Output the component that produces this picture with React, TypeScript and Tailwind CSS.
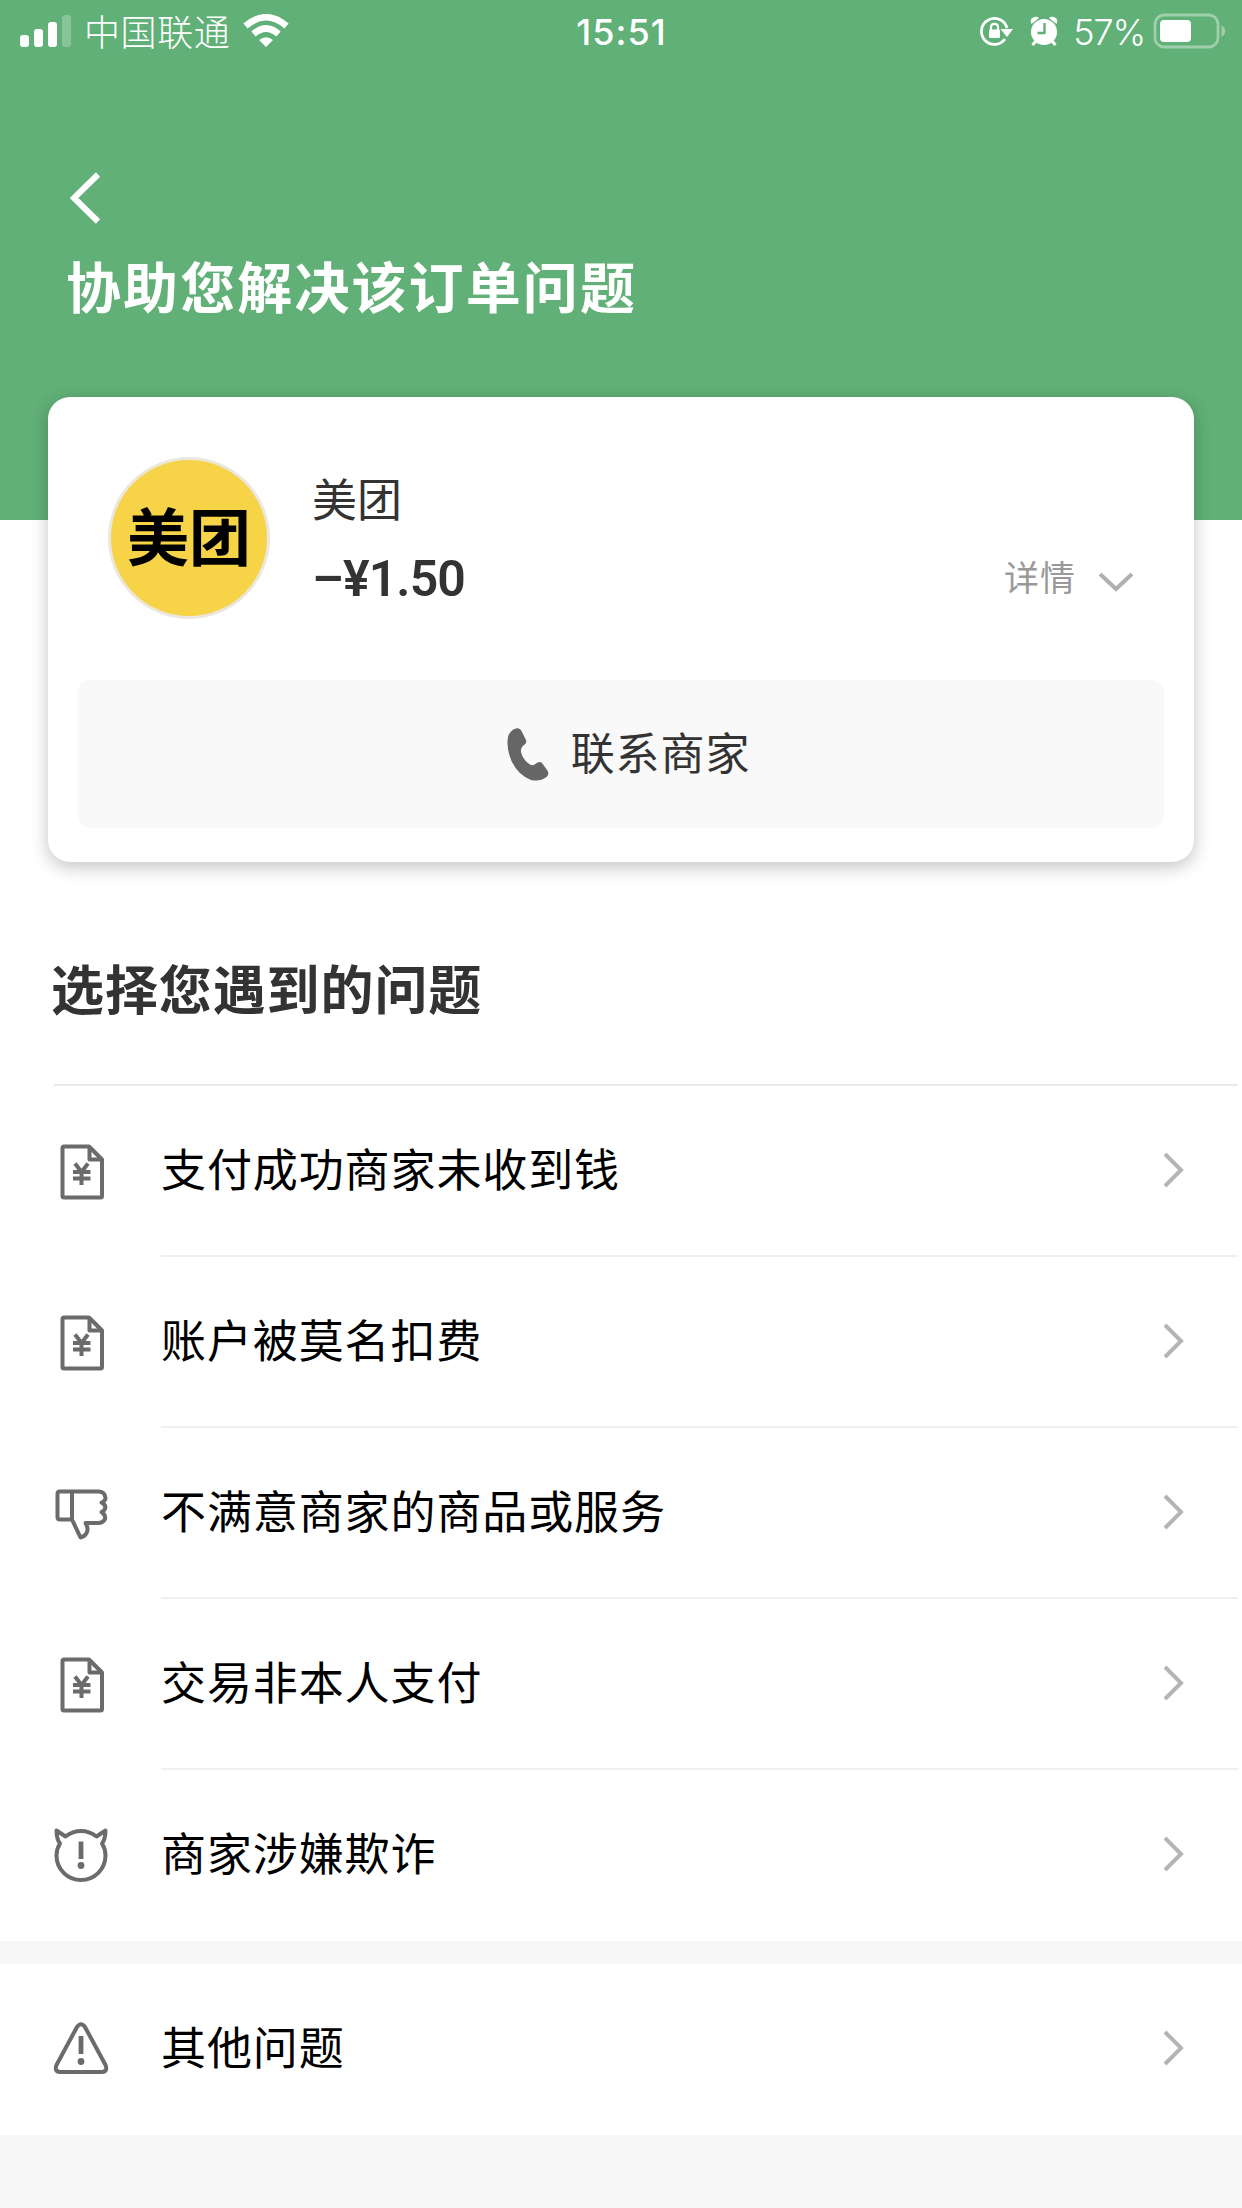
import type { ReactNode } from "react";

type IconName = "bill" | "thumb" | "devil" | "warn";

type Issue = {
  id: string;
  icon: IconName;
  label: string;
};

const ISSUES: Issue[] = [
  { id: "unpaid", icon: "bill", label: "支付成功商家未收到钱" },
  { id: "unknown-fee", icon: "bill", label: "账户被莫名扣费" },
  { id: "unsatisfied", icon: "thumb", label: "不满意商家的商品或服务" },
  { id: "not-me", icon: "bill", label: "交易非本人支付" },
  { id: "fraud", icon: "devil", label: "商家涉嫌欺诈" }
];

const OTHER: Issue = { id: "other", icon: "warn", label: "其他问题" };

// All issue icons share a 60x60 box.
const ICONS: Record<IconName, ReactNode> = {
  bill: (
    <>
      <path d="M12.5 5.500 H38 L51 18.500 V55 Q51 56.500 49.500 56.500 H13 Q11.500 56.500 11.500 55 V7 Q11.500 5.500 13 5.500 Z" />
      <path d="M38.500 6 V18.500 H50.500" />
      <path d="M24 22.500 L30.500 31 L37 22.500 M30.500 31 V44 M22 31 H39.500 M22 37.500 H39.500" />
    </>
  ),
  thumb: (
    <>
      <path d="M8.500 8.500 H48 Q54 9 54.500 15 Q54.500 18 50.500 19.500 Q55.500 22 54 26 Q53 28 50.500 29 Q55 32 54 36 Q52 40 47 40 H34.500 Q38 46 35.500 50 Q34 53.500 29.500 54.500 L21 36.500 H9 Q6.500 36.500 6.500 34 V11 Q6.500 8.500 8.500 8.500 Z" />
      <path d="M21 8.500 V36.500" />
    </>
  ),
  devil: (
    <>
      <path d="M14.500 11.500 Q22 6 30 6 Q38 6 45.500 11.500 L54.500 5.500 Q54.500 14 51 18.500 Q54.500 24 54.500 30.500 A24.500 24.500 0 0 1 5.500 30.500 Q5.500 24 9 18.500 Q5.500 14 5.500 5.500 Z" />
      <path d="M30 16.500 V34" strokeWidth="4.800" />
      <circle cx="30" cy="40.500" r="3.400" fill="currentColor" stroke="none" />
    </>
  ),
  warn: (
    <>
      <path d="M26 8 Q30 2.500 34 8 L54.500 46 Q57 52.500 51 53 H9 Q3 52.500 5.500 46 Z" />
      <path d="M30 17 V35" strokeWidth="4.800" />
      <circle cx="30" cy="42.500" r="3.400" fill="currentColor" stroke="none" />
    </>
  )
};

function IssueIcon({ name }: { name: IconName }) {
  return (
    <svg viewBox="0 0 60 60" className="mb-0.5 h-[60px] w-[60px] shrink-0 text-[#6b6b6b]" fill="none" stroke="currentColor" strokeWidth="4" strokeLinejoin="round">
      {ICONS[name]}
    </svg>
  );
}

function IssueRow({ issue, last = false }: { issue: Issue; last?: boolean }) {
  return (
    <button type="button" className="flex h-[171px] w-full items-center pl-[51px] text-left">
      <IssueIcon name={issue.icon} />
      <span
        className={
          last
            ? "ml-[50px] mr-1 flex h-full flex-1 items-center justify-between pr-[53px] pb-0.5"
            : "ml-[50px] mr-1 flex h-full flex-1 items-center justify-between border-b-2 border-[#f0f0f0] pr-[53px]"
        }
      >
        <span className="pb-1.5 text-[45px] leading-[60px] tracking-[0.9px] text-black">{issue.label}</span>
        <svg viewBox="0 0 24 40" className="mb-0.5 h-10 w-6" fill="none" stroke="#b4b4b4" strokeWidth="4">
          <path d="M4 4 L20 20 L4 36" />
        </svg>
      </span>
    </button>
  );
}

function StatusBar() {
  return (
    <div className="grid h-[60px] grid-cols-3 items-center pl-5 pr-[15px] text-white">
      <div className="flex items-center">
        <div className="flex items-end gap-[5px]">
          <span className="h-3 w-[9px] rounded-[3px] bg-white" />
          <span className="h-[18px] w-[9px] rounded-[3px] bg-white" />
          <span className="h-[25px] w-[9px] rounded-[3px] bg-white" />
          <span className="h-8 w-[9px] rounded-[3px] bg-white/25" />
        </div>
        <span className="ml-[13px] pb-0.5 text-[36px] font-light leading-[58px] tracking-[0.6px]">中国联通</span>
        <svg viewBox="0 0 46 34" className="ml-[13px] h-[34px] w-[46px]" fill="none" stroke="white" strokeWidth="6.500">
          <path d="M2.500 12 Q23 -5.500 43.500 12" />
          <path d="M10.500 20 Q23 9 35.500 20" />
          <path d="M16 26 Q23 20.500 30 26 L23 33 Z" fill="white" stroke="none" />
        </svg>
      </div>
      <span className="pr-1 pt-0.5 text-center font-[Inter] text-[36px] font-medium leading-[60px] tracking-[1px]">15:51</span>
      <div className="flex items-center justify-end">
        <svg viewBox="0 0 34 32" className="h-8 w-[34px]" fill="none" stroke="white" strokeWidth="2.800">
          <path d="M26 24 A13 13 0 1 1 28 13" />
          <path d="M21.500 14 H34 L28 22 Z" fill="white" stroke="none" />
          <rect x="10" y="14.500" width="11" height="8.500" rx="1" fill="white" stroke="none" />
          <path d="M12 15 V12 Q12 8.800 15.500 8.800 Q19 8.800 19 12 V15" strokeWidth="2.200" />
        </svg>
        <svg viewBox="0 0 30 32" className="ml-4 h-8 w-[30px]" fill="none">
          <circle cx="15" cy="17" r="13" fill="white" />
          <path d="M2.500 9 Q0 4 5 2 Q8 1 10 3 Z M27.500 9 Q30 4 25 2 Q22 1 20 3 Z" fill="white" />
          <path d="M7 26 L3.500 30 M23 26 L26.500 30" stroke="white" strokeWidth="3" />
          <path d="M15.500 8 V18 H8.500" stroke="#61b077" strokeWidth="2.400" />
        </svg>
        <span className="ml-[14px] pt-0.5 font-[Inter] text-[36px] font-light leading-[60px] tracking-[-1.2px]">57%</span>
        <svg viewBox="0 0 74 36" className="ml-2 h-9 w-[74px]" fill="none">
          <rect x="2" y="2" width="63" height="32" rx="9" stroke="white" strokeOpacity="0.4" strokeWidth="2.800" />
          <rect x="7" y="7" width="31" height="22" rx="4" fill="white" />
          <path d="M68.500 12 Q76 18 68.500 24 Z" fill="white" fillOpacity="0.4" />
        </svg>
      </div>
    </div>
  );
}

function OrderCard() {
  return (
    <section className="mx-12 -mt-[123px] h-[465px] rounded-[22px] bg-white px-[30px] pt-[60px] shadow-[0_5px_18px_rgba(0,0,0,0.24)]">
      <div className="flex h-[162px] items-center pl-[30px] pr-[30px]">
        <div className="flex h-[162px] w-[162px] shrink-0 items-center justify-center rounded-full border-[3px] border-[#ebe7dc] bg-[#f7d347]">
          <span className="pb-2 text-[62px] font-bold leading-none text-black">美团</span>
        </div>
        <div className="ml-[42px] flex-1">
          <div className="text-[45px] leading-[60px] text-[#333]">美团</div>
          <div className="mt-4 flex items-center justify-between">
            <span className="pt-1.5 font-[Roboto] text-[50px] font-semibold leading-[58px] tracking-[-0.9px] text-[#333]">–¥1.50</span>
            <span className="flex items-center gap-[22px] text-[35px] leading-[60px] tracking-[1px] text-[#999]">
              详情
              <svg viewBox="0 0 36 22" className="mt-3 h-[22px] w-9" fill="none" stroke="#b0b0b0" strokeWidth="4">
                <path d="M2 3 L18 18 L34 3" />
              </svg>
            </span>
          </div>
        </div>
      </div>
      <button type="button" className="mt-[61px] flex h-[148px] w-full items-center justify-center gap-[22px] rounded-xl bg-[#f9f9f9] pl-[15px]">
        <svg viewBox="0 0 42 53" className="h-[53px] w-[42px]" fill="#666">
          <path d="M9 0.500 Q13 -0.500 15 4 L19 12 Q20 15 17 17 Q13.500 19.500 14 24 Q16 32 23 36.500 Q26 38 28.500 36 Q32 32.500 35 35 L40 42 Q43 46 39.500 49 Q33 54 24 52 Q11 47 4.500 33 Q-1 20 1 9 Q3 2 9 0.500 Z" />
        </svg>
        <span className="pb-1.5 text-[44px] leading-[60px] tracking-[0.9px] text-[#333]">联系商家</span>
      </button>
    </section>
  );
}

export default function App() {
  return (
    <main className="min-h-[2208px] w-full bg-[#f7f7f7] font-['Noto_Sans_CJK_SC',sans-serif]">
      <div className="bg-white">
        <header className="h-[520px] bg-[#61b077] text-white">
          <StatusBar />
          <button type="button" className="ml-[68px] mt-[110px] block">
            <svg viewBox="0 0 34 56" className="h-14 w-[34px]" fill="none" stroke="white" strokeWidth="6">
              <path d="M30 4.500 L6 28 L30 51.500" />
            </svg>
          </button>
          <h1 className="ml-[66px] mt-[18px] text-[55px] font-bold leading-[80px] tracking-[2.1px]">协助您解决该订单问题</h1>
        </header>
        <OrderCard />
        <h2 className="ml-[51px] mt-[85px] text-[53px] font-bold leading-[80px] tracking-[0.9px] text-[#333]">选择您遇到的问题</h2>
        <div className="ml-[54px] mr-1 mt-[57px] h-0.5 bg-[#e9e9e9]" />
        {ISSUES.map((issue, index) => (
          <IssueRow key={issue.id} issue={issue} last={index === ISSUES.length - 1} />
        ))}
      </div>
      <div className="mt-[23px] bg-white">
        <IssueRow issue={OTHER} last />
      </div>
    </main>
  );
}
